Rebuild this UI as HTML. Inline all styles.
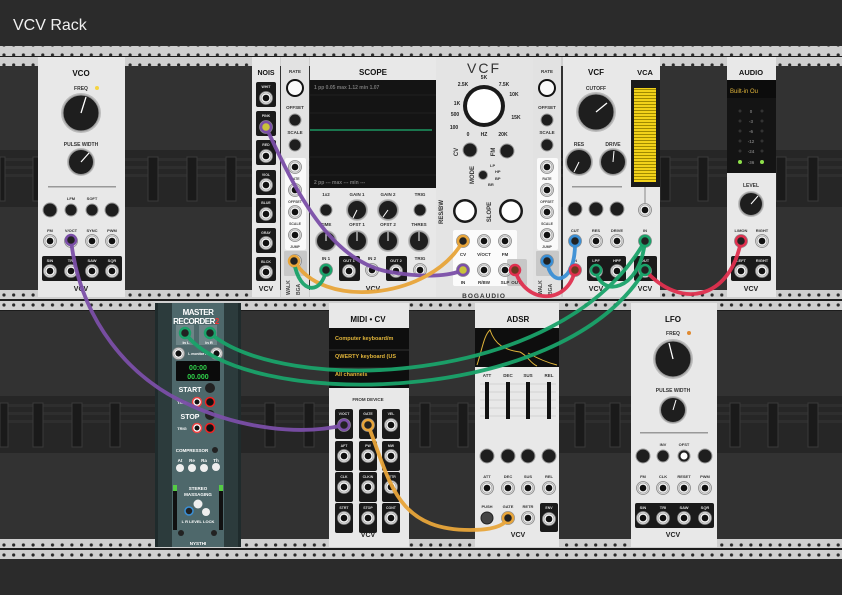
<!DOCTYPE html>
<html><head><meta charset="utf-8"><style>
html,body{margin:0;padding:0;background:#2b2b2b;width:842px;height:595px;overflow:hidden}
svg{display:block}
text{font-family:"Liberation Sans",sans-serif;font-weight:bold}
circle[fill="#1e1e1e"]{stroke:#9a9a9a;stroke-width:1}
</style></head><body>
<svg width="842" height="595" viewBox="0 0 842 595" xmlns="http://www.w3.org/2000/svg">
<defs>
<pattern id="rd" x="0" y="0" width="9.7" height="10" patternUnits="userSpaceOnUse"><circle cx="4" cy="5" r="1.6" fill="#2a2a2a"/></pattern>
<symbol id="j" viewBox="-7 -7 14 14" overflow="visible"><circle r="6.5" fill="#d8d8d8" stroke="#888" stroke-width="0.8"/><circle r="5" fill="#f4f4f4" stroke="#999" stroke-width="0.6"/><circle r="3.3" fill="#111"/></symbol>
<pattern id="vb" width="4" height="3" patternUnits="userSpaceOnUse"><rect y="2" width="4" height="1" fill="#a08a00"/></pattern>
</defs>
<rect width="842" height="595" fill="#2b2b2b"/>
<text x="13" y="30" fill="#f0f0f0" font-size="16" style="font-weight:normal">VCV Rack</text>

<rect x="0" y="46" width="842" height="512" fill="#1c1c1c"/>
<g fill="#323232">
<rect x="0" y="66" width="842" height="224"/>
<rect x="0" y="311" width="842" height="229"/>
</g>
<g fill="#262626"><rect x="0" y="150" width="842" height="57"/><rect x="0" y="396" width="842" height="57"/></g>
<g fill="#2e2e2e"><rect x="0" y="158" width="842" height="3"/><rect x="0" y="166" width="842" height="3"/><rect x="0" y="174" width="842" height="3"/><rect x="0" y="404" width="842" height="3"/><rect x="0" y="412" width="842" height="3"/><rect x="0" y="420" width="842" height="3"/></g>
<g fill="#1a1a1a" stroke="#3a3a3a" stroke-width="1">
<rect x="0" y="157" width="5" height="44"/><rect x="33" y="157" width="10" height="44"/><rect x="148" y="157" width="10" height="44"/><rect x="187" y="157" width="10" height="44"/><rect x="226" y="157" width="10" height="44"/>
<rect x="660" y="157" width="10" height="44"/><rect x="698" y="157" width="10" height="44"/><rect x="776" y="157" width="10" height="44"/><rect x="808" y="157" width="10" height="44"/>
<rect x="0" y="403" width="8" height="44"/><rect x="33" y="403" width="10" height="44"/><rect x="72" y="403" width="10" height="44"/><rect x="110" y="403" width="10" height="44"/><rect x="265" y="403" width="10" height="44"/><rect x="304" y="403" width="10" height="44"/><rect x="420" y="403" width="10" height="44"/><rect x="458" y="403" width="10" height="44"/><rect x="575" y="403" width="10" height="44"/><rect x="610" y="403" width="10" height="44"/><rect x="730" y="403" width="10" height="44"/><rect x="768" y="403" width="10" height="44"/><rect x="808" y="403" width="10" height="44"/>
</g>
<g>
<rect x="0" y="46" width="842" height="10" fill="#cfcfcf"/><rect x="0" y="46" width="842" height="10" fill="url(#rd)"/>
<rect x="0" y="57" width="842" height="9" fill="#cfcfcf"/><rect x="0" y="56" width="842" height="10" fill="url(#rd)"/>
<rect x="0" y="290" width="842" height="9" fill="#cfcfcf"/><rect x="0" y="289" width="842" height="10" fill="url(#rd)"/>
<rect x="0" y="301" width="842" height="9" fill="#cfcfcf"/><rect x="0" y="300" width="842" height="10" fill="url(#rd)"/>
<rect x="0" y="539" width="842" height="9" fill="#cfcfcf"/><rect x="0" y="538" width="842" height="10" fill="url(#rd)"/>
<rect x="0" y="550" width="842" height="9" fill="#cfcfcf"/><rect x="0" y="549" width="842" height="10" fill="url(#rd)"/>
</g>

<!-- VCO -->
<g>
<rect x="38" y="57" width="87" height="240" fill="#e8e8e8"/>
<text x="81" y="76" font-size="8" text-anchor="middle" fill="#111">VCO</text>
<text x="81" y="90" font-size="5" text-anchor="middle" fill="#333">FREQ</text><circle cx="97" cy="88" r="2" fill="#f5d442"/>
<circle cx="81" cy="113" r="20" fill="#bbb"/><circle cx="81" cy="113" r="18" fill="#1e1e1e"/><line x1="81" y1="113" x2="86" y2="97" stroke="#fff" stroke-width="1.3"/>
<text x="81" y="146" font-size="5" text-anchor="middle" fill="#333">PULSE WIDTH</text>
<circle cx="81" cy="162" r="14" fill="#bbb"/><circle cx="81" cy="162" r="12.5" fill="#1e1e1e"/><line x1="81" y1="162" x2="89" y2="153" stroke="#fff" stroke-width="1.2"/>
<rect x="48" y="186" width="68" height="1.5" fill="#999"/>
<text x="71" y="200" font-size="4" text-anchor="middle" fill="#333">LFM</text><text x="92" y="200" font-size="4" text-anchor="middle" fill="#333">SOFT</text>
<circle cx="50" cy="210" r="7" fill="#1e1e1e"/><circle cx="71" cy="210" r="6" fill="#1e1e1e"/><circle cx="92" cy="210" r="6" fill="#1e1e1e"/><circle cx="112" cy="210" r="7" fill="#1e1e1e"/>
<text x="50" y="232" font-size="4" text-anchor="middle" fill="#333">FM</text><text x="71" y="232" font-size="4" text-anchor="middle" fill="#333">V/OCT</text><text x="92" y="232" font-size="4" text-anchor="middle" fill="#333">SYNC</text><text x="112" y="232" font-size="4" text-anchor="middle" fill="#333">PWM</text>
<use href="#j" x="43" y="234" width="14" height="14"/><use href="#j" x="64" y="234" width="14" height="14"/><use href="#j" x="85" y="234" width="14" height="14"/><use href="#j" x="105" y="234" width="14" height="14"/>
<rect x="42" y="256" width="80" height="25" rx="2" fill="#1a1a1a"/>
<text x="50" y="262" font-size="4" text-anchor="middle" fill="#ddd">SIN</text><text x="71" y="262" font-size="4" text-anchor="middle" fill="#ddd">TRI</text><text x="92" y="262" font-size="4" text-anchor="middle" fill="#ddd">SAW</text><text x="112" y="262" font-size="4" text-anchor="middle" fill="#ddd">SQR</text>
<use href="#j" x="43" y="264" width="14" height="14"/><use href="#j" x="64" y="264" width="14" height="14"/><use href="#j" x="85" y="264" width="14" height="14"/><use href="#j" x="105" y="264" width="14" height="14"/>
<text x="81" y="291" font-size="7" text-anchor="middle" fill="#222">VCV</text>
</g>

<!-- NOIS -->
<g>
<rect x="252" y="57" width="28" height="240" fill="#e8e8e8"/>
<text x="266" y="75" font-size="7" text-anchor="middle" fill="#111">NOIS</text>
<g fill="#1a1a1a"><rect x="256" y="82" width="20" height="25" rx="2"/><rect x="256" y="111" width="20" height="25" rx="2"/><rect x="256" y="140" width="20" height="25" rx="2"/><rect x="256" y="170" width="20" height="25" rx="2"/><rect x="256" y="198" width="20" height="25" rx="2"/><rect x="256" y="228" width="20" height="25" rx="2"/><rect x="256" y="257" width="20" height="24" rx="2"/></g>
<g font-size="3.5" fill="#ddd" text-anchor="middle"><text x="266" y="88">WHIT</text><text x="266" y="117">PINK</text><text x="266" y="146">RED</text><text x="266" y="176">VIOL</text><text x="266" y="204">BLUE</text><text x="266" y="234">GRAY</text><text x="266" y="263">BLCK</text></g>
<use href="#j" x="259" y="91" width="14" height="14"/><use href="#j" x="259" y="120" width="14" height="14"/><use href="#j" x="259" y="149" width="14" height="14"/><use href="#j" x="259" y="178" width="14" height="14"/><use href="#j" x="259" y="207" width="14" height="14"/><use href="#j" x="259" y="236" width="14" height="14"/><use href="#j" x="259" y="265" width="14" height="14"/>
<text x="266" y="291" font-size="7" text-anchor="middle" fill="#222">VCV</text>
</g>

<!-- walker modules -->
<g>
<rect x="281" y="57" width="28" height="240" fill="#e2e2e2"/>
<text x="295" y="73" font-size="4.5" text-anchor="middle" fill="#333">RATE</text>
<circle cx="295" cy="88" r="9" fill="#111"/><circle cx="295" cy="88" r="7" fill="#fafafa"/>
<text x="295" y="109" font-size="4.5" text-anchor="middle" fill="#333">OFFSET</text>
<circle cx="295" cy="120" r="6" fill="#1e1e1e"/>
<text x="295" y="134" font-size="4.5" text-anchor="middle" fill="#333">SCALE</text>
<circle cx="295" cy="145" r="6" fill="#1e1e1e"/>
<rect x="285" y="158" width="21" height="92" rx="2" fill="#fafafa"/>
<use href="#j" x="288" y="160" width="14" height="14"/><use href="#j" x="288" y="183" width="14" height="14"/><use href="#j" x="288" y="205" width="14" height="14"/><use href="#j" x="288" y="228" width="14" height="14"/>
<g font-size="3.5" text-anchor="middle" fill="#444"><text x="295" y="180">RATE</text><text x="295" y="203">OFFSET</text><text x="295" y="225">SCALE</text><text x="295" y="248">JUMP</text></g>
<rect x="284" y="251" width="23" height="25" rx="1" fill="#c8c8c8"/>
<use href="#j" x="288" y="254" width="14" height="14"/>
<text x="290" y="295" font-size="5" fill="#444" transform="rotate(-90 290 295)">WALK</text>
<text x="300" y="295" font-size="5" fill="#444" transform="rotate(-90 300 295)">BGA</text>
</g>
<g transform="translate(252 0)">
<rect x="281" y="57" width="28" height="240" fill="#e2e2e2"/>
<text x="295" y="73" font-size="4.5" text-anchor="middle" fill="#333">RATE</text>
<circle cx="295" cy="88" r="9" fill="#111"/><circle cx="295" cy="88" r="7" fill="#fafafa"/>
<text x="295" y="109" font-size="4.5" text-anchor="middle" fill="#333">OFFSET</text>
<circle cx="295" cy="120" r="6" fill="#1e1e1e"/>
<text x="295" y="134" font-size="4.5" text-anchor="middle" fill="#333">SCALE</text>
<circle cx="295" cy="145" r="6" fill="#1e1e1e"/>
<rect x="285" y="158" width="21" height="92" rx="2" fill="#fafafa"/>
<use href="#j" x="288" y="160" width="14" height="14"/><use href="#j" x="288" y="183" width="14" height="14"/><use href="#j" x="288" y="205" width="14" height="14"/><use href="#j" x="288" y="228" width="14" height="14"/>
<g font-size="3.5" text-anchor="middle" fill="#444"><text x="295" y="180">RATE</text><text x="295" y="203">OFFSET</text><text x="295" y="225">SCALE</text><text x="295" y="248">JUMP</text></g>
<rect x="284" y="251" width="23" height="25" rx="1" fill="#c8c8c8"/>
<use href="#j" x="288" y="254" width="14" height="14"/>
<text x="290" y="295" font-size="5" fill="#444" transform="rotate(-90 290 295)">WALK</text>
<text x="300" y="295" font-size="5" fill="#444" transform="rotate(-90 300 295)">BGA</text>
</g>

<!-- SCOPE -->
<g>
<rect x="310" y="57" width="126" height="240" fill="#e8e8e8"/>
<text x="373" y="75" font-size="8" text-anchor="middle" fill="#111">SCOPE</text>
<rect x="310" y="80" width="126" height="108" fill="#141414"/>
<g stroke="#262626" stroke-width="0.7"><line x1="310" y1="113" x2="436" y2="113"/><line x1="310" y1="157" x2="436" y2="157"/><line x1="310" y1="95" x2="436" y2="95"/><line x1="310" y1="175" x2="436" y2="175"/></g>
<line x1="310" y1="130" x2="432" y2="130" stroke="#1fb070" stroke-width="1.3"/>
<g font-size="5" fill="#777" style="font-weight:normal" font-family="Liberation Mono"><text x="314" y="89">1  pp  0.05  max  1.12  min  1.07</text><text x="314" y="184">2  pp  ---   max  ---   min  ---</text></g>
<g font-size="4.5" text-anchor="middle" fill="#333"><text x="326" y="196">1x2</text><text x="357" y="196">GAIN 1</text><text x="388" y="196">GAIN 2</text><text x="420" y="196">TRIG</text>
<text x="326" y="226">TIME</text><text x="357" y="226">OFST 1</text><text x="388" y="226">OFST 2</text><text x="419" y="226">THRES</text>
<text x="326" y="260">IN 1</text><text x="372" y="260">IN 2</text><text x="420" y="260">TRIG</text></g>
<circle cx="326" cy="210" r="6" fill="#1e1e1e"/><circle cx="420" cy="210" r="6" fill="#1e1e1e"/>
<circle cx="357" cy="210" r="11" fill="#bbb"/><circle cx="357" cy="210" r="9.5" fill="#1e1e1e"/><line x1="357" y1="210" x2="353" y2="218" stroke="#fff"/>
<circle cx="388" cy="210" r="11" fill="#bbb"/><circle cx="388" cy="210" r="9.5" fill="#1e1e1e"/><line x1="388" y1="210" x2="383" y2="217" stroke="#fff"/>
<g><circle cx="326" cy="241" r="11" fill="#bbb"/><circle cx="326" cy="241" r="9.5" fill="#1e1e1e"/><line x1="326" y1="241" x2="326" y2="232" stroke="#fff"/>
<circle cx="357" cy="241" r="11" fill="#bbb"/><circle cx="357" cy="241" r="9.5" fill="#1e1e1e"/><line x1="357" y1="241" x2="357" y2="232" stroke="#fff"/>
<circle cx="388" cy="241" r="11" fill="#bbb"/><circle cx="388" cy="241" r="9.5" fill="#1e1e1e"/><line x1="388" y1="241" x2="388" y2="232" stroke="#fff"/>
<circle cx="419" cy="241" r="11" fill="#bbb"/><circle cx="419" cy="241" r="9.5" fill="#1e1e1e"/><line x1="419" y1="241" x2="419" y2="232" stroke="#fff"/></g>
<rect x="339" y="256" width="21" height="25" rx="2" fill="#1a1a1a"/><rect x="386" y="256" width="21" height="25" rx="2" fill="#1a1a1a"/>
<g font-size="4" text-anchor="middle" fill="#ddd"><text x="349" y="262">OUT 1</text><text x="396" y="262">OUT 2</text></g>
<use href="#j" x="319" y="263" width="14" height="14"/><use href="#j" x="342" y="264" width="14" height="14"/><use href="#j" x="365" y="263" width="14" height="14"/><use href="#j" x="389" y="264" width="14" height="14"/><use href="#j" x="413" y="263" width="14" height="14"/>
<text x="373" y="291" font-size="7" text-anchor="middle" fill="#222">VCV</text>
</g>

<!-- BOGAUDIO VCF -->
<g>
<rect x="436" y="57" width="97" height="240" fill="#e4e4e4"/>
<text x="484" y="73" font-size="14" text-anchor="middle" fill="#333" style="font-weight:normal;letter-spacing:2px">VCF</text>
<circle cx="484" cy="106" r="21" fill="#1a1a1a"/><circle cx="484" cy="106" r="17" fill="#fff"/>
<g font-size="5" text-anchor="middle" fill="#222"><text x="484" y="79">5K</text><text x="463" y="86">2.5K</text><text x="504" y="86">7.5K</text><text x="457" y="105">1K</text><text x="455" y="116">500</text><text x="454" y="129">100</text><text x="468" y="136">0</text><text x="484" y="136">HZ</text><text x="503" y="136">20K</text><text x="514" y="96">10K</text><text x="516" y="119">15K</text></g>
<circle cx="470" cy="150" r="7" fill="#1e1e1e"/><circle cx="507" cy="151" r="7" fill="#1e1e1e"/>
<text x="458" y="152" font-size="6" fill="#333" transform="rotate(-90 458 152)" text-anchor="middle">CV</text><text x="495" y="152" font-size="6" fill="#333" transform="rotate(-90 495 152)" text-anchor="middle">FM</text>
<text x="474" y="175" font-size="6" fill="#333" transform="rotate(-90 474 175)" text-anchor="middle">MODE</text>
<circle cx="483" cy="175" r="4.5" fill="#1e1e1e"/>
<g font-size="4" fill="#333"><text x="490" y="167">LP</text><text x="495" y="173">HP</text><text x="495" y="180">BP</text><text x="488" y="186">BR</text></g>
<text x="443" y="212" font-size="6" fill="#333" transform="rotate(-90 443 212)" text-anchor="middle">RES/BW</text>
<text x="491" y="212" font-size="6" fill="#333" transform="rotate(-90 491 212)" text-anchor="middle">SLOPE</text>
<circle cx="465" cy="211" r="12" fill="#1a1a1a"/><circle cx="465" cy="211" r="9.5" fill="#fff"/>
<circle cx="511" cy="211" r="12" fill="#1a1a1a"/><circle cx="511" cy="211" r="9.5" fill="#fff"/>
<rect x="453" y="230" width="64" height="56" rx="2" fill="#fbfbfb"/>
<rect x="507" y="259" width="20" height="27" rx="2" fill="#c7c7c7"/>
<use href="#j" x="456" y="234" width="14" height="14"/><use href="#j" x="477" y="234" width="14" height="14"/><use href="#j" x="498" y="234" width="14" height="14"/>
<use href="#j" x="456" y="263" width="14" height="14"/><use href="#j" x="477" y="263" width="14" height="14"/><use href="#j" x="498" y="263" width="14" height="14"/>
<g font-size="4.5" text-anchor="middle" fill="#333"><text x="463" y="256">CV</text><text x="484" y="256">V/OCT</text><text x="505" y="256">FM</text><text x="463" y="284">IN</text><text x="484" y="284">R/BW</text><text x="505" y="284">SLP</text><text x="516" y="284">OUT</text></g>
<text x="484" y="298" font-size="6.5" text-anchor="middle" fill="#333" style="letter-spacing:1px">BOGAUDIO</text>
</g>

<!-- VCF -->
<g>
<rect x="563" y="57" width="68" height="240" fill="#e8e8e8"/>
<text x="596" y="75" font-size="8" text-anchor="middle" fill="#111">VCF</text>
<text x="596" y="90" font-size="5" text-anchor="middle" fill="#333">CUTOFF</text>
<circle cx="596" cy="112" r="20" fill="#bbb"/><circle cx="596" cy="112" r="18" fill="#1e1e1e"/><line x1="596" y1="112" x2="607" y2="103" stroke="#fff" stroke-width="1.3"/>
<g font-size="5" text-anchor="middle" fill="#333"><text x="579" y="146">RES</text><text x="613" y="146">DRIVE</text></g>
<circle cx="579" cy="162" r="14" fill="#bbb"/><circle cx="579" cy="162" r="12.5" fill="#1e1e1e"/><line x1="579" y1="162" x2="574" y2="172" stroke="#fff"/>
<circle cx="613" cy="162" r="14" fill="#bbb"/><circle cx="613" cy="162" r="12.5" fill="#1e1e1e"/><line x1="613" y1="162" x2="614" y2="151" stroke="#fff"/>
<rect x="572" y="186" width="50" height="1.5" fill="#999"/>
<circle cx="575" cy="209" r="7" fill="#1e1e1e"/><circle cx="596" cy="209" r="7" fill="#1e1e1e"/><circle cx="617" cy="209" r="7" fill="#1e1e1e"/>
<g font-size="4" text-anchor="middle" fill="#333"><text x="575" y="232">CUT</text><text x="596" y="232">RES</text><text x="617" y="232">DRIVE</text><text x="575" y="262">IN</text></g>
<use href="#j" x="568" y="234" width="14" height="14"/><use href="#j" x="589" y="234" width="14" height="14"/><use href="#j" x="610" y="234" width="14" height="14"/>
<use href="#j" x="568" y="263" width="14" height="14"/>
<rect x="587" y="256" width="39" height="25" rx="2" fill="#1a1a1a"/>
<g font-size="4" text-anchor="middle" fill="#ddd"><text x="596" y="262">LPF</text><text x="617" y="262">HPF</text></g>
<use href="#j" x="589" y="264" width="14" height="14"/><use href="#j" x="610" y="264" width="14" height="14"/>
<text x="596" y="291" font-size="7" text-anchor="middle" fill="#222">VCV</text>
</g>

<!-- VCA -->
<g>
<rect x="631" y="57" width="29" height="240" fill="#e8e8e8"/>
<text x="645" y="75" font-size="7.5" text-anchor="middle" fill="#111">VCA</text>
<rect x="631" y="80" width="29" height="107" fill="#1a1a1a"/>
<rect x="634" y="88" width="22" height="94" fill="#f2d21a"/>
<rect x="634" y="88" width="22" height="94" fill="url(#vb)"/>
<line x1="645" y1="187" x2="645" y2="205" stroke="#888"/>
<use href="#j" x="638" y="203" width="14" height="14"/>
<text x="645" y="232" font-size="4" text-anchor="middle" fill="#333">IN</text>
<use href="#j" x="638" y="234" width="14" height="14"/>
<rect x="634" y="256" width="23" height="25" rx="2" fill="#1a1a1a"/>
<text x="645" y="262" font-size="4" text-anchor="middle" fill="#ddd">OUT</text>
<use href="#j" x="638" y="264" width="14" height="14"/>
<text x="645" y="291" font-size="7" text-anchor="middle" fill="#222">VCV</text>
</g>

<!-- AUDIO -->
<g>
<rect x="727" y="57" width="49" height="240" fill="#e8e8e8"/>
<text x="751" y="75" font-size="7.5" text-anchor="middle" fill="#111">AUDIO</text>
<rect x="727" y="80" width="49" height="93" fill="#141414"/>
<rect x="727" y="80" width="49" height="18" fill="#0c0c0c"/>
<text x="730" y="93" font-size="6" fill="#e0b43a" font-family="Liberation Mono" style="font-weight:normal">Built-in Ou</text>
<g font-size="4.5" text-anchor="middle" fill="#777" style="font-weight:normal"><text x="751" y="113">0</text><text x="751" y="123">-3</text><text x="751" y="133">-6</text><text x="751" y="143">-12</text><text x="751" y="153">-24</text><text x="751" y="164">-36</text></g>
<g fill="#333"><circle cx="740" cy="111" r="1.5"/><circle cx="762" cy="111" r="1.5"/><circle cx="740" cy="121" r="1.5"/><circle cx="762" cy="121" r="1.5"/><circle cx="740" cy="131" r="1.5"/><circle cx="762" cy="131" r="1.5"/><circle cx="740" cy="141" r="1.5"/><circle cx="762" cy="141" r="1.5"/><circle cx="740" cy="151" r="1.5"/><circle cx="762" cy="151" r="1.5"/></g>
<circle cx="740" cy="162" r="2" fill="#8ee04a"/><circle cx="762" cy="162" r="2" fill="#8ee04a"/>
<text x="751" y="187" font-size="5" text-anchor="middle" fill="#333">LEVEL</text>
<circle cx="751" cy="204" r="13" fill="#bbb"/><circle cx="751" cy="204" r="11.5" fill="#1e1e1e"/><line x1="751" y1="204" x2="758" y2="196" stroke="#fff"/>
<g font-size="4" text-anchor="middle" fill="#333"><text x="741" y="232">L/MON</text><text x="762" y="232">RIGHT</text></g>
<use href="#j" x="734" y="234" width="14" height="14"/><use href="#j" x="755" y="234" width="14" height="14"/>
<rect x="731" y="256" width="40" height="25" rx="2" fill="#1a1a1a"/>
<g font-size="4" text-anchor="middle" fill="#ddd"><text x="741" y="262">LEFT</text><text x="762" y="262">RIGHT</text></g>
<use href="#j" x="734" y="264" width="14" height="14"/><use href="#j" x="755" y="264" width="14" height="14"/>
<text x="751" y="291" font-size="7" text-anchor="middle" fill="#222">VCV</text>
</g>

<!-- Master recorder -->
<g>
<rect x="155" y="303" width="86" height="244" fill="#1f2b2c"/>
<rect x="158" y="303" width="14" height="244" fill="#2c3b3c"/><rect x="224" y="303" width="14" height="244" fill="#2c3b3c"/>
<rect x="172" y="303" width="52" height="244" fill="#4e686b"/>
<text x="198" y="315" font-size="8" text-anchor="middle" fill="#fff" style="letter-spacing:-0.5px">MASTER</text>
<text x="196" y="324" font-size="8" text-anchor="middle" fill="#fff" style="letter-spacing:-0.5px">RECORDER<tspan fill="#e33">2</tspan></text>
<rect x="176" y="325" width="18" height="20" fill="#6d8487"/><rect x="199" y="325" width="18" height="20" fill="#6d8487"/>
<circle cx="185" cy="333" r="5" fill="#111"/><circle cx="210" cy="333" r="5" fill="#111"/>
<text x="186" y="344" font-size="4" text-anchor="middle" fill="#fff">In L</text><text x="209" y="344" font-size="4" text-anchor="middle" fill="#fff">In R</text>
<use href="#j" x="172" y="347" width="13" height="13"/><use href="#j" x="210" y="347" width="13" height="13"/>
<text x="198" y="355" font-size="3.5" text-anchor="middle" fill="#fff">L monitor R</text>
<rect x="176" y="361" width="44" height="20" rx="1" fill="#0b0b0b"/>
<text x="198" y="370" font-size="7" text-anchor="middle" fill="#2fd24a" font-family="Liberation Mono">00:00</text>
<text x="198" y="379" font-size="7" text-anchor="middle" fill="#2fd24a" font-family="Liberation Mono">00.000</text>
<text x="190" y="392" font-size="7" text-anchor="middle" fill="#fff">START</text><circle cx="210" cy="388" r="5" fill="#222"/>
<text x="182" y="404" font-size="4" text-anchor="middle" fill="#fff">TRIG</text>
<circle cx="197" cy="402" r="4.5" fill="#fff" stroke="#e44" stroke-width="1.5"/><circle cx="197" cy="402" r="2.5" fill="#111"/>
<circle cx="210" cy="402" r="4.5" fill="#111" stroke="#e22" stroke-width="1.5"/>
<text x="190" y="419" font-size="7" text-anchor="middle" fill="#fff">STOP</text><circle cx="210" cy="415" r="5" fill="#222"/>
<text x="182" y="430" font-size="4" text-anchor="middle" fill="#fff">TRIG</text>
<circle cx="197" cy="428" r="4.5" fill="#fff" stroke="#e44" stroke-width="1.5"/><circle cx="197" cy="428" r="2.5" fill="#111"/>
<circle cx="210" cy="428" r="4.5" fill="#111" stroke="#e22" stroke-width="1.5"/>
<text x="192" y="452" font-size="4.5" text-anchor="middle" fill="#fff">COMPRESSOR</text><circle cx="215" cy="450" r="3" fill="#222"/>
<g font-size="4.5" text-anchor="middle" fill="#fff"><text x="180" y="462">At</text><text x="192" y="462">Re</text><text x="204" y="462">Ra</text><text x="216" y="462">Th</text></g>
<g fill="#eee"><circle cx="180" cy="468" r="4"/><circle cx="192" cy="468" r="4"/><circle cx="204" cy="468" r="4"/><circle cx="216" cy="467" r="4"/></g>
<text x="198" y="490" font-size="4.5" text-anchor="middle" fill="#fff">STEREO</text><text x="198" y="496" font-size="4.5" text-anchor="middle" fill="#fff">MASSAGING</text>
<circle cx="198" cy="504" r="4.5" fill="#eee"/><circle cx="206" cy="512" r="4" fill="#eee"/><circle cx="189" cy="511" r="4" fill="#222" stroke="#3a8fd6" stroke-width="1.5"/>
<rect x="173" y="485" width="4" height="45" fill="#111"/><rect x="173" y="485" width="4" height="6" fill="#5c4"/>
<rect x="219" y="485" width="4" height="45" fill="#111"/><rect x="219" y="485" width="4" height="6" fill="#5c4"/>
<text x="198" y="523" font-size="4" text-anchor="middle" fill="#fff">L R LEVEL LOCK</text>
<circle cx="181" cy="533" r="3" fill="#222"/><circle cx="214" cy="533" r="3" fill="#222"/>
<text x="198" y="545" font-size="4.5" text-anchor="middle" fill="#fff">NYSTHI</text>
</g>

<!-- MIDI-CV -->
<g>
<rect x="329" y="303" width="80" height="244" fill="#e8e8e8"/>
<text x="368" y="322" font-size="8" text-anchor="middle" fill="#111">MIDI • CV</text>
<rect x="329" y="328" width="80" height="60" fill="#0e0e0e"/>
<line x1="329" y1="350" x2="409" y2="350" stroke="#333"/><line x1="329" y1="368" x2="409" y2="368" stroke="#333"/>
<g font-size="5.5" fill="#e0b43a" font-family="Liberation Mono" style="font-weight:normal"><text x="335" y="340">Computer keyboard/m</text><text x="335" y="358">QWERTY keyboard (US</text><text x="335" y="376">All channels</text></g>
<text x="368" y="401" font-size="4.5" text-anchor="middle" fill="#333">FROM DEVICE</text>
<g fill="#1a1a1a">
<rect x="335" y="409" width="18" height="30" rx="2"/><rect x="359" y="409" width="18" height="30" rx="2"/><rect x="382" y="409" width="18" height="30" rx="2"/>
<rect x="335" y="441" width="18" height="30" rx="2"/><rect x="359" y="441" width="18" height="30" rx="2"/><rect x="382" y="441" width="18" height="30" rx="2"/>
<rect x="335" y="472" width="18" height="30" rx="2"/><rect x="359" y="472" width="18" height="30" rx="2"/><rect x="382" y="472" width="18" height="30" rx="2"/>
<rect x="335" y="503" width="18" height="30" rx="2"/><rect x="359" y="503" width="18" height="30" rx="2"/><rect x="382" y="503" width="18" height="30" rx="2"/></g>
<g font-size="3.5" text-anchor="middle" fill="#ddd"><text x="344" y="415">V/OCT</text><text x="368" y="415">GATE</text><text x="391" y="415">VEL</text><text x="344" y="447">AFT</text><text x="368" y="447">PW</text><text x="391" y="447">MW</text><text x="344" y="478">CLK</text><text x="368" y="478">CLK/N</text><text x="391" y="478">RETR</text><text x="344" y="509">STRT</text><text x="368" y="509">STOP</text><text x="391" y="509">CONT</text></g>
<use href="#j" x="337" y="418" width="14" height="14"/><use href="#j" x="361" y="418" width="14" height="14"/><use href="#j" x="384" y="418" width="14" height="14"/>
<use href="#j" x="337" y="449" width="14" height="14"/><use href="#j" x="361" y="449" width="14" height="14"/><use href="#j" x="384" y="449" width="14" height="14"/>
<use href="#j" x="337" y="480" width="14" height="14"/><use href="#j" x="361" y="480" width="14" height="14"/><use href="#j" x="384" y="480" width="14" height="14"/>
<use href="#j" x="337" y="511" width="14" height="14"/><use href="#j" x="361" y="511" width="14" height="14"/><use href="#j" x="384" y="511" width="14" height="14"/>
<text x="368" y="537" font-size="7" text-anchor="middle" fill="#222">VCV</text>
</g>

<!-- ADSR -->
<g>
<rect x="475" y="303" width="84" height="244" fill="#e8e8e8"/>
<text x="518" y="322" font-size="8" text-anchor="middle" fill="#111">ADSR</text>
<rect x="475" y="328" width="84" height="39" fill="#0e0e0e"/>
<path d="M477,365 C482,350 484,335 490,330 C495,345 505,350 520,352 C528,356 530,363 537,366 M528,353 C535,357 545,362 557,365" fill="none" stroke="#e0b43a" stroke-width="1"/>
<g font-size="4.5" text-anchor="middle" fill="#333"><text x="487" y="377">ATT</text><text x="508" y="377">DEC</text><text x="528" y="377">SUS</text><text x="549" y="377">REL</text></g>
<g stroke="#bbb" stroke-width="0.6"><line x1="480" y1="392" x2="556" y2="392"/><line x1="480" y1="400" x2="556" y2="400"/><line x1="480" y1="408" x2="556" y2="408"/><line x1="480" y1="384" x2="556" y2="384"/><line x1="480" y1="416" x2="556" y2="416"/></g>
<g fill="#111"><rect x="485" y="382" width="4" height="37"/><rect x="506" y="382" width="4" height="37"/><rect x="526" y="382" width="4" height="37"/><rect x="547" y="382" width="4" height="37"/></g>
<circle cx="487" cy="456" r="7" fill="#1e1e1e"/><circle cx="508" cy="456" r="7" fill="#1e1e1e"/><circle cx="528" cy="456" r="7" fill="#1e1e1e"/><circle cx="549" cy="456" r="7" fill="#1e1e1e"/>
<g font-size="4" text-anchor="middle" fill="#333"><text x="487" y="478">ATT</text><text x="508" y="478">DEC</text><text x="528" y="478">SUS</text><text x="549" y="478">REL</text><text x="487" y="508">PUSH</text><text x="508" y="508">GATE</text><text x="528" y="508">RETR</text></g>
<use href="#j" x="480" y="481" width="14" height="14"/><use href="#j" x="501" y="481" width="14" height="14"/><use href="#j" x="521" y="481" width="14" height="14"/><use href="#j" x="542" y="481" width="14" height="14"/>
<circle cx="487" cy="518" r="6" fill="#444" stroke="#222"/>
<use href="#j" x="501" y="511" width="14" height="14"/><use href="#j" x="521" y="511" width="14" height="14"/>
<rect x="540" y="503" width="18" height="29" rx="2" fill="#1a1a1a"/><text x="549" y="509" font-size="3.5" text-anchor="middle" fill="#ddd">ENV</text>
<use href="#j" x="542" y="512" width="14" height="14"/>
<text x="518" y="537" font-size="7" text-anchor="middle" fill="#222">VCV</text>
</g>

<!-- LFO -->
<g>
<rect x="631" y="303" width="86" height="244" fill="#e8e8e8"/>
<text x="673" y="322" font-size="8" text-anchor="middle" fill="#111">LFO</text>
<text x="673" y="335" font-size="5" text-anchor="middle" fill="#333">FREQ</text><circle cx="689" cy="333" r="2" fill="#e08a30"/>
<circle cx="673" cy="359" r="20" fill="#bbb"/><circle cx="673" cy="359" r="18" fill="#1e1e1e"/><line x1="673" y1="359" x2="669" y2="343" stroke="#fff" stroke-width="1.3"/>
<text x="673" y="392" font-size="5" text-anchor="middle" fill="#333">PULSE WIDTH</text>
<circle cx="673" cy="410" r="14" fill="#bbb"/><circle cx="673" cy="410" r="12.5" fill="#1e1e1e"/><line x1="673" y1="410" x2="676" y2="400" stroke="#fff"/>
<rect x="640" y="432" width="68" height="1.5" fill="#999"/>
<g font-size="4" text-anchor="middle" fill="#333"><text x="663" y="446">INV</text><text x="684" y="446">OFST</text><text x="643" y="478">FM</text><text x="663" y="478">CLK</text><text x="684" y="478">RESET</text><text x="705" y="478">PWM</text></g>
<circle cx="643" cy="456" r="7" fill="#1e1e1e"/><circle cx="663" cy="456" r="6" fill="#1e1e1e"/><circle cx="684" cy="456" r="6" fill="#1e1e1e"/><circle cx="684" cy="456" r="3.5" fill="#fff"/><circle cx="705" cy="456" r="7" fill="#1e1e1e"/>
<use href="#j" x="636" y="481" width="14" height="14"/><use href="#j" x="656" y="481" width="14" height="14"/><use href="#j" x="677" y="481" width="14" height="14"/><use href="#j" x="698" y="481" width="14" height="14"/>
<rect x="635" y="503" width="79" height="25" rx="2" fill="#1a1a1a"/>
<g font-size="4" text-anchor="middle" fill="#ddd"><text x="643" y="509">SIN</text><text x="663" y="509">TRI</text><text x="684" y="509">SAW</text><text x="705" y="509">SQR</text></g>
<use href="#j" x="636" y="511" width="14" height="14"/><use href="#j" x="656" y="511" width="14" height="14"/><use href="#j" x="677" y="511" width="14" height="14"/><use href="#j" x="698" y="511" width="14" height="14"/>
<text x="673" y="537" font-size="7" text-anchor="middle" fill="#222">VCV</text>
</g>

<!-- CABLES -->
<g fill="none" stroke-width="3.8" stroke-linecap="round" opacity="0.95">
<path d="M71,240 C80,320 130,380 190,405 C240,428 300,436 344,425" stroke="#7b4fa8"/>
<path d="M266,127 C295,190 330,262 390,272 C425,278 450,276 463,270" stroke="#7b4fa8"/>
<path d="M294,260 C320,310 430,300 463,241" stroke="#e8a53a"/>
<path d="M294,262 C300,296 322,294 326,270" stroke="#1aa36a"/>
<path d="M368,425 C390,480 395,530 470,530 C495,530 505,525 508,518" stroke="#e8a53a"/>
<path d="M185,333 C240,410 560,410 645,270" stroke="#1aa36a"/>
<path d="M210,333 C280,395 560,390 645,241" stroke="#1aa36a"/>
<path d="M596,270 C600,298 640,292 645,241" stroke="#1aa36a"/>
<path d="M515,270 C525,305 568,305 575,270" stroke="#e0304f"/>
<path d="M575,241 C576,285 550,288 547,261" stroke="#3a8fd6"/>
<path d="M645,270 C680,310 730,300 741,241" stroke="#e0304f"/>
</g>
<g fill="#222" stroke-width="2.5">
<circle cx="71" cy="240" r="5" stroke="#7b4fa8"/><circle cx="344" cy="425" r="5" stroke="#7b4fa8"/>
<circle cx="266" cy="127" r="5" stroke="#7b4fa8" fill="#c9c23a"/><circle cx="463" cy="270" r="5" stroke="#7b4fa8" fill="#c9c23a"/>
<circle cx="294" cy="261" r="5" stroke="#e8a53a"/><circle cx="463" cy="241" r="5" stroke="#e8a53a"/>
<circle cx="326" cy="270" r="5" stroke="#1aa36a"/>
<circle cx="368" cy="425" r="5" stroke="#e8a53a"/><circle cx="508" cy="518" r="5" stroke="#e8a53a"/>
<circle cx="185" cy="333" r="5" stroke="#1aa36a"/><circle cx="210" cy="333" r="5" stroke="#1aa36a"/>
<circle cx="645" cy="270" r="5" stroke="#1aa36a"/><circle cx="645" cy="241" r="5" stroke="#1aa36a"/><circle cx="596" cy="270" r="5" stroke="#1aa36a"/>
<circle cx="515" cy="270" r="5" stroke="#e0304f" fill="#6a3a20"/><circle cx="575" cy="270" r="5" stroke="#e0304f" fill="#6a3a20"/>
<circle cx="575" cy="241" r="5" stroke="#3a8fd6"/><circle cx="547" cy="261" r="5" stroke="#3a8fd6"/>
<circle cx="741" cy="241" r="5" stroke="#e0304f"/>
</g>
</svg>
</body></html>
